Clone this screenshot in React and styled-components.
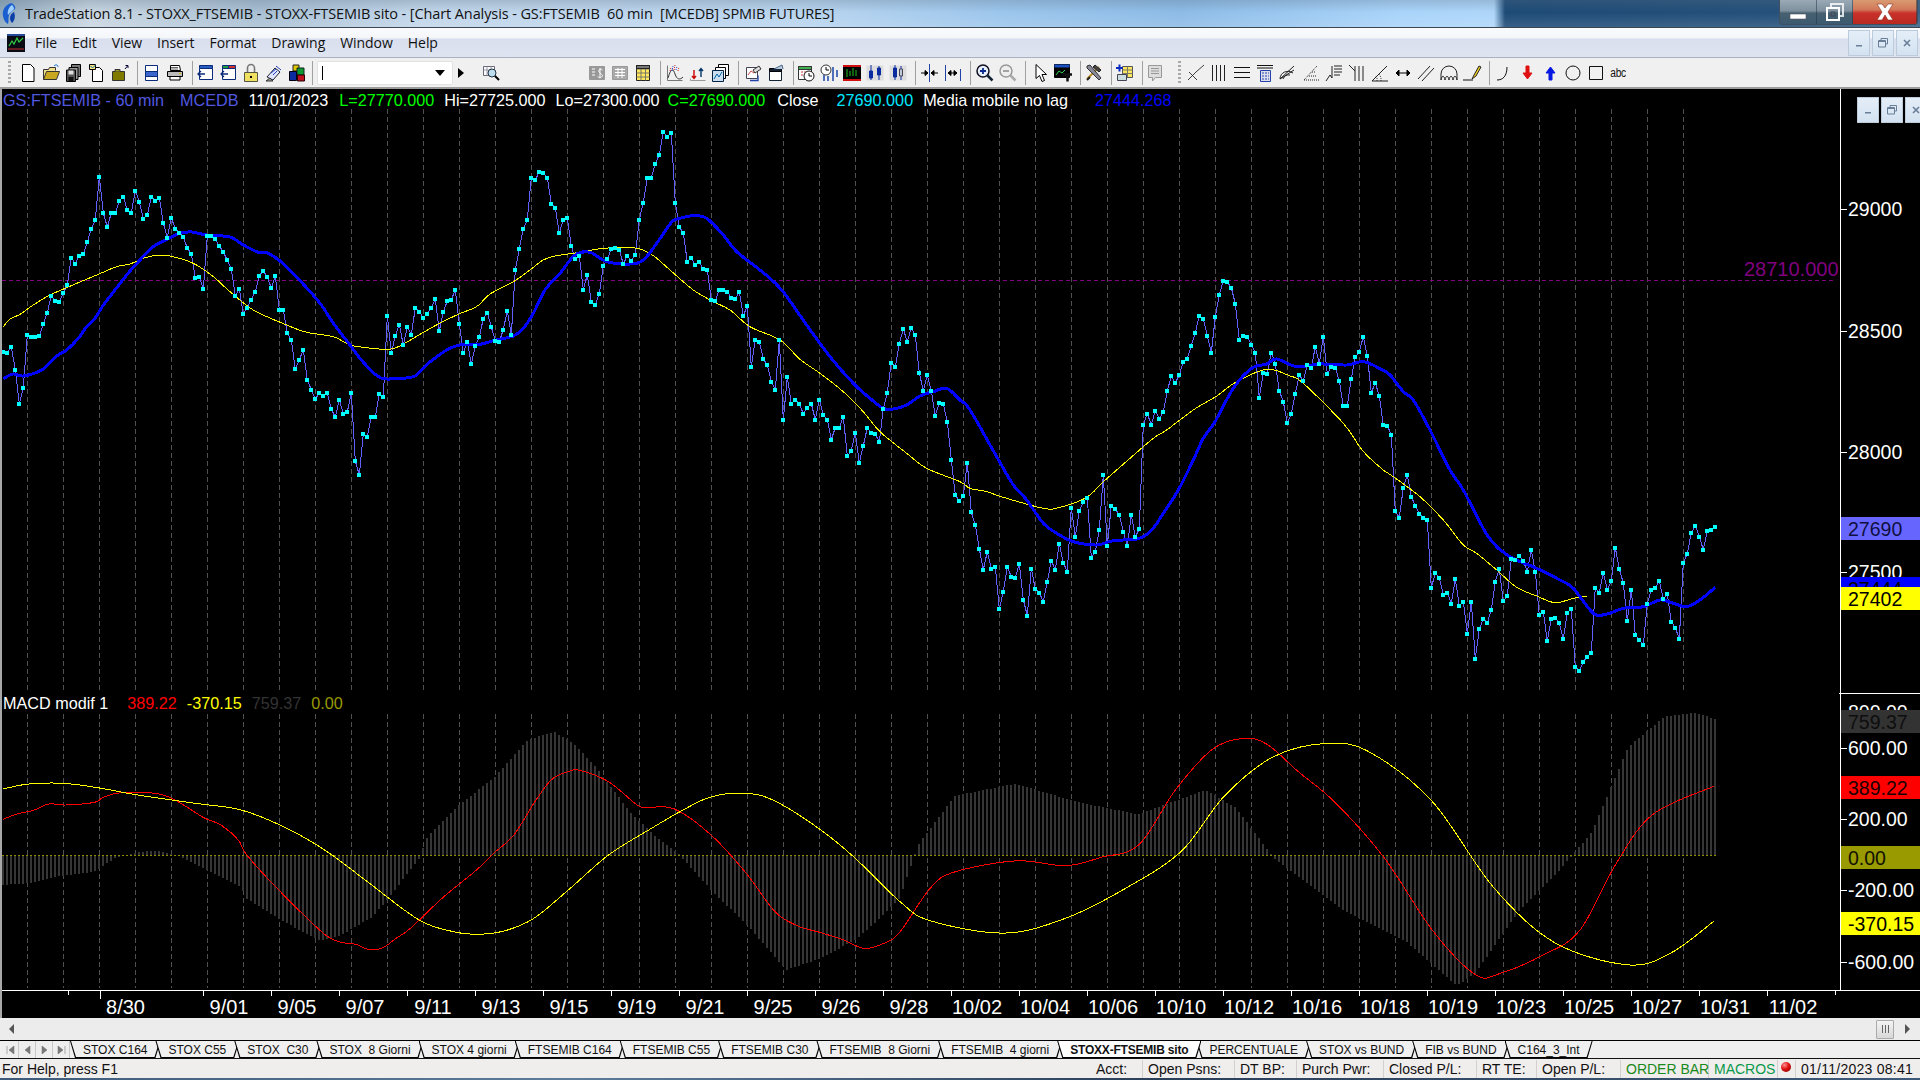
import React from 'react'
import styled, { createGlobalStyle } from 'styled-components'

const GlobalStyle = createGlobalStyle`
  html, body { margin: 0; padding: 0; background: #000; overflow: hidden; }
  * { box-sizing: border-box; }
`

// ---- chart data, read off the screen in pixels ----
const priceRaw = [
  // 120 + v/3
  [120, [696,698,681,749,851,803,645,650,651,648,612,578,527,543,546,519,494,413,431,407,401,366,327,299,171,279,321,279,279,243,230,270,279,212,245,296,285,230,243,233,308,354,293,327,339,351,384,402,474,471,507,348,347,356,378,396,420,447,527,507,581,563,539,515,467,452,471,504,467,569,571,638,660,747,719,689,779,809,837,819,827,818,867,891,839,882,876,818,1023,1065,941,951,890,890,821,831,587,699,647,614,675,620,645,563,575,593,581,563,537,633,575,543,539,509,611,699,665,732,677,651]],
  [120, [596,578,621,662,665,629,572,645,450,386,327,299,173,180,155,158,173,251,263,339,299,293,378,417,407,509,464,545,555,521,437,417,387,383,389,432,407,423,404,299,248,173,173,131,104,35,50,38,248,321,339,425,413,435,425,447,450,539,543,509,509,515,533,537,515,587,557,741,659,665,717,735,785,809,660,899,771,851,840,851,881,863,851,899,839,885,899,959,923,923,890,1008,992,938,1028,977,923,939,943,965,867,818,728,741,671,627,665,623,645,759,812,765,813,887,849,853,905,1019,1125]],
  [260, [723,707,608,757,795,866,929,875,927,920,1047,995,920,950,953,911,1019,1067,926,987,998,1025,965,902,929,851,908,935,743,830,753,725,713,893,875,809,645,857,737,747,764,815,857,765,830,807,494,461,494,452,477,455,393,347,369,345,305,296,257,218,167,176,227,279,171,104,63,66,83,131,239,227,230,254,279,413,339,341,278,311,393,425,489,461,401,345,363,314,323,260,311,230,341,320,323,363,437,437,356,291,275,230,287,398,369,407]],
  [260, [495,497,524,753,773,684,645,710,737,761,773,779,984,938,953,1004,998,1031,957,1037,1025,1121,1025,1196,1107,1077,1089,1049,965,927,1023,1008,897,899,887,903,935,869,935,1065,1055,1143,1076,1073,1089,1137,1059,1047,1221,1233,1205,1191,1179,983,998,938,989,963,863,927,969,1083,989,1125,1139,1155,1031,989,983,962,1017,1001,1085,1103,1137,908,881,818,797,830,869,813,809,801]],
]
const priceY = priceRaw.flatMap(([y0, ys]) => ys.map((v) => y0 + v / 3))
const price = priceY.map((y, i) => [3.33 + 4 * i, y])

const crop = (x0, y0, list) => list.map(([x, y]) => [x0 + x / 3, y0 + y / 3])
const mdi = (x, y) => [x / 1.742, 690 + y / 3]
const ref = (x, y) => [x * 1.2245, y * 1.2245]

const blueMa = [
  ...crop(0, 120, [[10,776],[40,762],[70,768],[125,750],[170,708],[200,690],[235,655],[260,620],[285,595],[310,555],[345,510],[380,465],[420,420],[460,380],[500,358],[540,340],[575,336],[620,345],[690,351],[730,375],[775,397],[800,398],[840,423],[900,482],[960,550],[1000,610],[1050,675],[1080,715],[1120,758],[1150,776],[1200,775],[1245,768],[1285,730],[1340,690],[1380,675],[1440,673]]),
  ...crop(480, 120, [[40,662],[100,648],[130,625],[160,580],[195,510],[240,460],[285,405],[330,397],[380,425],[450,432],[490,420],[530,370],[575,306],[600,295],[640,287],[680,295],[730,345],[770,395],[850,458],[905,510],[980,615],[1050,710],[1120,790],[1170,835],[1210,865],[1240,867],[1280,855],[1320,828],[1360,815],[1400,805],[1440,840]]),
  ...crop(900, 260, [[210,450],[290,590],[340,675],[380,720],[430,790],[470,820],[520,845],[590,855],[640,842],[715,836],[755,810],[790,760],[835,690],[880,600],[910,535],[945,485],[1000,385],[1055,325],[1100,312],[1130,297],[1190,320],[1260,312],[1340,315],[1390,305]]),
  ...crop(1360, 260, [[58,325],[90,345],[130,395],[160,420],[210,510],[270,630],[310,690],[385,830],[450,890],[530,925],[600,960],[640,985],[700,1060],[740,1062],[790,1045],[850,1040],[900,1020],[940,1030],[980,1040],[1020,1020],[1066,982]]),
]
const yellowMa = [
  ...crop(0, 120, [[10,620],[30,597],[60,583],[100,555],[150,525],[200,503],[290,465],[350,440],[390,432],[430,415],[470,406],[510,408],[580,430],[640,470],[690,515],[760,570],[860,615],[920,637],[1000,650],[1050,675],[1100,683],[1170,688],[1210,672],[1300,620],[1370,585],[1420,565],[1440,552]]),
  ...crop(480, 120, [[30,522],[100,485],[150,450],[190,420],[230,407],[300,397],[370,385],[460,383],[500,395],[530,415],[570,450],[640,510],[700,545],[750,570],[810,620],[900,660],[960,718],[1020,760],[1090,815],[1150,875],[1200,935],[1280,1000],[1340,1045],[1440,1085]]),
  ...crop(900, 260, [[210,685],[260,695],[310,712],[430,745],[480,742],[560,712],[610,665],[690,595],[760,535],[800,510],[880,450],[950,408],[1010,365],[1100,328],[1170,348],[1210,370],[1330,490]]),
  ...crop(1360, 260, [[0,562],[30,595],[70,630],[100,650],[180,710],[250,780],[310,855],[350,880],[410,930],[470,982],[530,1008],[585,1028],[640,1015],[680,1009]]),
]
const macdRed = [
  ...[[5,388],[30,372],[60,360],[85,342],[115,345],[165,337],[180,322],[210,308],[275,311],[310,335],[355,383],[385,405],[415,450],[430,495],[480,590],[560,725],[590,755],[620,763],[640,777],[665,775],[690,745],[715,715],[770,625],[830,540],[860,490],[895,435],[930,340],[960,270],[990,245],[1010,241],[1060,275],[1110,345],[1130,352],[1175,357],[1240,437],[1300,550],[1350,665],[1390,708],[1430,728],[1470,750],[1505,775],[1540,760],[1568,725]].map(([x, y]) => mdi(x, y)),
  ...[[760,725],[780,712],[830,703],[870,707],[900,700],[930,690],[960,645],[990,612],[1015,603],[1035,608],[1060,630],[1090,655],[1130,700],[1170,760],[1205,796],[1225,795],[1260,780],[1290,760],[1320,705],[1350,665],[1400,642]].map(([x, y]) => ref(x, y)),
]
const macdYellow = [
  ...[[5,297],[50,282],[110,280],[170,293],[240,315],[340,340],[420,360],[500,415],[570,485],[640,575],[730,690],[790,725],[830,733],[880,722],[930,685],[990,600],[1060,495],[1130,420],[1190,360],[1240,320],[1300,310],[1350,333],[1430,420],[1490,505],[1568,635]].map(([x, y]) => mdi(x, y)),
  ...[[760,752],[820,762],[870,750],[920,725],[965,695],[1000,650],[1040,618],[1085,607],[1120,615],[1170,655],[1220,725],[1270,770],[1330,788],[1365,778],[1400,752]].map(([x, y]) => ref(x, y)),
]
const histOutline = [
  ...[[0,585],[50,580],[100,560],[165,545],[200,505],[240,487],[275,481],[310,497],[350,530],[420,590],[430,625],[500,700],[560,752],[590,740],[650,680],[680,620],[710,550],[730,510],[745,440],[800,345],[860,265],[920,150],[965,125],[1000,160],[1040,235],[1100,370],[1150,450],[1185,495],[1200,525],[1250,620],[1300,700],[1370,840],[1430,805],[1490,750],[1530,690],[1568,625]].map(([x, y]) => mdi(x, y)),
  ...[[750,690],[780,650],[830,640],[880,655],[930,665],[985,645],[1010,660],[1040,700],[1060,715],[1100,745],[1150,770],[1190,805],[1205,795],[1240,745],[1270,715],[1300,680],[1330,610],[1360,585],[1385,582],[1400,587]].map(([x, y]) => ref(x, y)),
]
const histAt = (x) => {
  for (let i = 1; i < histOutline.length; i++) {
    const [x1, y1] = histOutline[i]
    const [x0, y0] = histOutline[i - 1]
    if (x <= x1) return y0 + ((x - x0) / (x1 - x0)) * (y1 - y0)
  }
  return histOutline[histOutline.length - 1][1]
}

const poly = (list) => list.map(([x, y]) => `${x.toFixed(1)},${y.toFixed(1)}`).join(' ')
// the averages are smooth in the picture, the points above are sparse
const smooth = (list) => {
  let d = `M${list[0][0].toFixed(1)} ${list[0][1].toFixed(1)}`
  for (let i = 0; i < list.length - 1; i++) {
    const p0 = list[i - 1] || list[i]
    const p1 = list[i]
    const p2 = list[i + 1]
    const p3 = list[i + 2] || p2
    const c1 = [p1[0] + (p2[0] - p0[0]) / 6, p1[1] + (p2[1] - p0[1]) / 6]
    const c2 = [p2[0] - (p3[0] - p1[0]) / 6, p2[1] - (p3[1] - p1[1]) / 6]
    d += `C${c1[0].toFixed(1)} ${c1[1].toFixed(1)} ${c2[0].toFixed(1)} ${c2[1].toFixed(1)} ${p2[0].toFixed(1)} ${p2[1].toFixed(1)}`
  }
  return d
}
const gridXs = Array.from({ length: 47 }, (_, i) => 27.5 + 36 * i)
const dateTicks = ['9/01','9/05','9/07','9/11','9/13','9/15','9/19','9/21','9/25','9/26','9/28','10/02','10/04','10/06','10/10','10/12','10/16','10/18','10/19','10/23','10/25','10/27','10/31','11/02']

// ---- page frame ----
const Page = styled.div`
  width: 1920px;
  height: 1080px;
  display: flex;
  flex-direction: column;
  overflow: hidden;
  background: #f0f0f0;
  font-family: "Liberation Sans", Arial, sans-serif;
`
const TitleBar = styled.div`
  height: 28px;
  flex: none;
  display: flex;
  align-items: center;
  justify-content: space-between;
  padding-left: 2px;
  border-bottom: 1px solid #3c4650;
  background:
    linear-gradient(180deg, rgba(90,110,130,.28) 0, rgba(255,255,255,0) 45%, rgba(255,255,255,.12) 100%),
    linear-gradient(90deg, #8fa9bd 0, #c9d6e2 90px, #a9c0d4 260px, #c2d6ea 420px, #b9d5ef 800px, #9cc6ec 1000px, #8dbbe6 1180px, #a9d4fa 1400px, #aed6fa 1494px, #1d4a76 1505px, #24507a 1780px, #3a6286 1920px);
`
const TitleText = styled.span`
  margin-left: 7px;
  font-family: "Open Sans", sans-serif;
  font-size: 14.5px;
  letter-spacing: -0.1px;
  white-space: pre;
  color: #111;
`
const TitleLeft = styled.div`
  display: flex;
  align-items: center;
`
const WindowButtons = styled.div`
  display: flex;
  height: 25px;
  margin: -3px 2px 0 0;
  border: 1px solid #40505f;
  border-top: 0;
  border-radius: 0 0 4px 4px;
  overflow: hidden;
`
const WindowButton = styled.div`
  width: ${(p) => p.$w}px;
  display: flex;
  align-items: center;
  justify-content: center;
  border-right: 1px solid rgba(30,50,70,.5);
  background: ${(p) => p.$close
    ? 'linear-gradient(180deg, #d99a70 0, #d2785a 40%, #c9302a 55%, #b92a20 100%)'
    : 'linear-gradient(180deg, #9aaab6 0, #7e909e 45%, #46606f 55%, #3d5a70 100%)'};
`
const MenuBar = styled.div`
  height: 30px;
  flex: none;
  display: flex;
  align-items: center;
  padding-left: 7px;
  border-bottom: 1px solid #aab2c2;
  background: linear-gradient(180deg, #fafbfd 0, #f4f6fa 35%, #d9dfee 37%, #dfe4f1 100%);
`
const MenuItems = styled.div`
  display: flex;
  gap: 15px;
  margin-left: 10px;
  flex: 1;
`
const MenuItem = styled.span`
  font-family: "Open Sans", sans-serif;
  font-size: 14px;
  letter-spacing: -0.05px;
  color: #111;
`
const MdiButtons = styled.div`
  display: flex;
  gap: 2px;
  padding-right: 2px;
`
const MdiButton = styled.div`
  width: 22px;
  height: 26px;
  display: flex;
  align-items: center;
  justify-content: center;
  border: 1px solid #bccbdc;
  background: linear-gradient(180deg, #e4eef8, #d4e2f1);
`

// ---- toolbar ----
const ToolBar = styled.div`
  height: 31px;
  flex: none;
  display: flex;
  align-items: center;
  padding-left: 8px;
  background: #f0f0f0;
  border-bottom: 2px solid #9c9c9c;
`
const Grip = styled.div`
  width: 3px;
  height: 24px;
  margin-left: ${(p) => p.$before || 0}px;
  margin-right: ${(p) => p.$after || 0}px;
  background: repeating-linear-gradient(180deg, #a8a8a8 0 2px, transparent 2px 4px);
`
const Sep = styled.div`
  width: 1px;
  height: 24px;
  margin: 0 ${(p) => p.$after ?? 2}px 0 ${(p) => p.$before ?? 6}px;
  background: #a0a0a0;
`
const ToolButton = styled.div`
  width: 23px;
  height: 24px;
  flex: none;
  display: flex;
  align-items: center;
  justify-content: center;
  margin-left: ${(p) => p.$before || 0}px;
`
const Combo = styled.div`
  width: 136px;
  height: 24px;
  margin-left: 4px;
  display: flex;
  align-items: center;
  justify-content: space-between;
  padding: 0 7px 0 4px;
  background: #fff;
  border: 1px solid #e2e2e2;
  border-radius: 2px;
`
const Caret = styled.div`
  width: 1px;
  height: 14px;
  background: #000;
`
const ComboArrow = styled.div`
  width: 0;
  height: 0;
  border-left: 5px solid transparent;
  border-right: 5px solid transparent;
  border-top: 6px solid #000;
`
const PlayArrow = styled.div`
  width: 0;
  height: 0;
  margin-left: 5px;
  border-top: 5px solid transparent;
  border-bottom: 5px solid transparent;
  border-left: 6px solid #000;
`
const AbcLabel = styled.span`
  font-size: 12px;
  letter-spacing: -0.4px;
  color: #111;
  transform: scaleX(.85);
`

const I = ({ children, size = 20 }) => (
  <svg width={size} height={size} viewBox="0 0 20 20" fill="none" stroke="#000" strokeWidth="1">{children}</svg>
)

const icons = {
  newDoc: <path d="M4.500 1.500h8l3.500 3.500v13.500h-11.500z" fill="#fff" />,
  open: <><path d="M2.500 16.500v-10h5l1-2h6v3" fill="#f0e08a" stroke="#333" /><path d="M2.500 16.500l3-8h13l-3 8z" fill="#c8a820" stroke="#333" /><path d="M13 3c2-2 4-1 4 1" stroke="#06c" /></>,
  saveAll: <><path d="M7.500 1.500h9v12h-9z" fill="#777" /><path d="M5 4.500h9v12h-9z" fill="#999" /><path d="M2.500 7h9v11.500h-9z" fill="#555" /><path d="M4.500 7.500h5v4h-5z" fill="#ddd" stroke="none" /><path d="M4.500 14h5v4h-5z" fill="#111" stroke="none" /></>,
  checkDoc: <><path d="M5.500 4.500h7l3 3v11h-10z" fill="#fff" /><path d="M2.500 1.500h6v5h-6z" fill="#ffe680" /><path d="M3.500 3l2 2 3-3" stroke="#06a" /></>,
  olive: <><path d="M2.500 8.500h12v9h-12z" fill="#807a00" stroke="#333" /><path d="M5 8.500v-2h5v2" fill="#a09a20" stroke="#333" /><path d="M15 6l2.500-3M15.500 2.500h2.500v2.500" stroke="#003" /></>,
  preview: <><path d="M3.500 2.500h12v15h-12z" fill="#fff" stroke="#0a2a7a" /><path d="M3.500 8.500h12v5h-12z" fill="#3a66cc" stroke="#0a2a7a" /></>,
  printer: <><path d="M5.500 2.500h9l1 5h-10z" fill="#fff" /><path d="M2.500 8.500h15v5h-15z" fill="#bbb" /><path d="M5 13.500h10v3.500h-10z" fill="#fff" /><path d="M6 4.500h7M6 6h7" stroke="#666" /><path d="M14 10.500h2" stroke="#e0c000" /></>,
  winBlue: <><path d="M4.500 2.500h13v3h-13z" fill="#2a5bc0" stroke="#0a2a7a" /><path d="M4.500 5.500h13v11h-13z" fill="#fff" stroke="#0a2a7a" /><path d="M10 11h-7M6 8l-3 3 3 3" stroke="#0a2a7a" strokeWidth="1.300" /></>,
  winRed: <><path d="M4.500 2.500h6v3h-6z" fill="#20a040" stroke="#0a2a7a" /><path d="M10.500 2.500h7v3h-7z" fill="#d03030" stroke="#0a2a7a" /><path d="M4.500 5.500h13v11h-13z" fill="#fff" stroke="#0a2a7a" /><path d="M10 11h-7M6 8l-3 3 3 3" stroke="#0a2a7a" strokeWidth="1.300" /></>,
  lock: <><path d="M6.500 9v-4a3.500 3.500 0 0 1 7 0v4" stroke="#777" strokeWidth="1.600" /><path d="M3.500 9.500h13v9h-13z" fill="#efe060" stroke="#554" /><path d="M9 13h2v2h-2z" fill="#000" stroke="none" /></>,
  scan: <><path d="M3 14l8-9 5 4-7 8z" fill="#dfe4ff" stroke="#223" /><path d="M7 10l5-4M9 12l4-4M12 3l5 4" stroke="#2040c0" /><path d="M2 18l4-3 3 3z" fill="#999" stroke="#333" /></>,
  cubes: <><path d="M6 2h6v6h-6z" fill="#e0c800" stroke="#222" /><path d="M10 5h7v7h-7z" fill="#0a9a30" stroke="#122" /><path d="M2.500 8.500h7v9h-7z" fill="#0a2aa0" stroke="#001" /><path d="M10.500 12h7v6h-7z" fill="#c01020" stroke="#200" /></>,
  findGrid: <><path d="M2.500 3.500h11v9h-11z" fill="#fff" stroke="#667" /><path d="M2.500 7h11M6 3.500v9M10 3.500v9" stroke="#99a" /><circle cx="11" cy="10" r="4" fill="#bde" stroke="#234" /><path d="M14 13l4 4" strokeWidth="2" /></>,
  calcGrey: <><path d="M2.500 3.500h15v13h-15z" fill="#999" stroke="#999" /><path d="M5 6h3M5 9h3M5 12h3" stroke="#fff" /><path d="M13 5v10M15.500 7c-2-2-5 0-3 2.500s4 2 2.500 4-4 1-4 0" stroke="#fff" /></>,
  tableGrey: <><path d="M2.500 3.500h15v13h-15z" fill="#aaa" stroke="#999" /><path d="M5 6.500h10M5 9.500h10M5 12.500h10M8 5v10M12 5v10" stroke="#fff" /></>,
  tableYellow: <><path d="M3.500 2.500h13v15h-13z" fill="#ffe860" stroke="#222" /><path d="M3.500 6h13M3.500 10h13M3.500 14h13M8 2.500v15M12.500 2.500v15" stroke="#776" /><path d="M3.500 2.500h13v3h-13z" fill="#777" stroke="#222" /></>,
  waves: <><path d="M2.500 2.500v15h15" stroke="#777" /><path d="M3 15c3-10 5-10 7-4s5 6 8 3" stroke="#333" /><path d="M5 8l1-4M9 7l1-5M13 8l1-4" stroke="#c22" strokeDasharray="1 1" /><path d="M7 8l1-5M11 7l1-4" stroke="#24c" strokeDasharray="1 1" /></>,
  redBlue: <><path d="M2.500 17.500h15M2.500 17.500v-2" stroke="#999" /><path d="M6 7v8M4 13l2 2.500 2-2.500" stroke="#c00" strokeWidth="1.400" /><path d="M13 14v-8M11 8l2-2.500 2 2.500" stroke="#036" strokeWidth="1.400" /></>,
  stack: <><path d="M7.500 1.500h10v11h-10z" fill="#fff" /><path d="M4.500 4.500h10v11h-10z" fill="#fff" /><path d="M1.500 7.500h11v11h-11z" fill="#cde" stroke="#024" /><path d="M3 16l3-5 2 3 3-5" stroke="#06a" /></>,
  docChart: <><path d="M3.500 4.500h11v11h-11z" fill="#fff" stroke="#445" /><path d="M5 12l3-4 3 2 4-6" stroke="#c44" /><path d="M7 17.500h8v-5" stroke="#24a" strokeWidth="1.300" /><path d="M10 7l6-4 2 3-6 4z" fill="#ddd" stroke="#333" /></>,
  winArrow: <><path d="M3.500 8.500h12v9h-12z" fill="#fff" stroke="#123" /><path d="M3.500 5.500h12v3h-12z" fill="#123" /><path d="M8 6l8-4 1 4" stroke="#468" fill="#bcd" /></>,
  calendar: <><path d="M2.500 3.500h13v13h-13z" fill="#fff" stroke="#333" /><path d="M2.500 3.500h13v3h-13z" fill="#40b050" stroke="#333" /><path d="M5 9h2M8 9h2M5 12h2" stroke="#c33" /><circle cx="13" cy="13" r="5" fill="#fff" stroke="#111" /><path d="M13 10v3h3" /></>,
  clockBars: <><circle cx="7" cy="7" r="5" fill="#fff" stroke="#333" /><path d="M7 4v3h3" /><path d="M5 12v6M9 13v5M14 4v14M18 7v7" stroke="#2a50b0" strokeWidth="1.600" /></>,
  darkChart: <><path d="M1 2h18v16h-18z" fill="#000" stroke="none" /><path d="M1 2h18v2h-18zM1 16h18v2h-18z" fill="#d01010" stroke="none" /><path d="M5 6v8M8 8v5M11 5v8M14 7v6" stroke="#20c020" /></>,
  candles: <><path d="M1.500 2.500h17v15h-17z" fill="#ddd" stroke="none" /><path d="M6 2v15M14 3v14" stroke="#0a2aa0" strokeWidth="1" /><path d="M4.500 8h3v7h-3zM12.500 5h3v7h-3z" fill="#0a2aa0" stroke="#0a2aa0" /></>,
  candlesRed: <><path d="M1.500 2.500h17v15h-17z" fill="#ddd" stroke="none" /><path d="M7 2v15M13 3v14" stroke="#0a2aa0" /><path d="M5.500 5h3v9h-3z" fill="#0a2aa0" stroke="#0a2aa0" /><path d="M11.500 6h3v7h-3z" fill="#c0c8d8" stroke="#445" /></>,
  squeeze: <><path d="M9.500 1v18" stroke="#24a" /><path d="M1 10h4M8 10l-3-2.500v5zM18 10h-4M11 10l3-2.500v5z" fill="#000" stroke="#000" /></>,
  spread: <><path d="M2.500 2v16M17.500 6v12" stroke="#24a" /><path d="M5 10l3-2.500v5zM14 10l-3-2.500v5zM8 10h3" fill="#000" stroke="#000" /></>,
  zoomIn: <><circle cx="8" cy="8" r="6" fill="#e8f0fa" stroke="#112" strokeWidth="1.500" /><path d="M5 8h6M8 5v6" stroke="#0a2a90" strokeWidth="1.800" /><path d="M12.500 12.500l5 5" stroke="#123" strokeWidth="2.500" /></>,
  zoomOut: <><circle cx="8" cy="8" r="6" fill="#eee" stroke="#999" strokeWidth="1.500" /><path d="M5 8h6" stroke="#999" strokeWidth="1.800" /><path d="M12.500 12.500l5 5" stroke="#aaa" strokeWidth="2.500" /></>,
  pointer: <path d="M6 1.500v14l3.500-3 2.500 6 2.500-1-2.500-6h4.500z" fill="#fff" stroke="#000" />,
  winT: <><path d="M1.500 1.500h15v13h-15z" fill="#000" stroke="#000" /><path d="M1.500 1.500h15v3h-15z" fill="#1a50c0" stroke="none" /><path d="M3 12l3-4 3 2 3-3" stroke="#30d050" /><path d="M10 11.500h9M14.500 11.500v7" stroke="#111" strokeWidth="2.500" /></>,
  hammer: <><path d="M3 16L15 4" stroke="#b88a20" strokeWidth="2" /><path d="M3 3l3-1 11 13-2 2L3 5z" fill="#889" stroke="#333" /><path d="M11 2l6 5-2 2-6-5z" fill="#444" stroke="#222" /><path d="M3 17l3-3" stroke="#222" strokeWidth="2" /></>,
  plusGrid: <><path d="M7.500 3.500h10v11h-10z" fill="#ffe860" stroke="#555" /><path d="M7.500 7h10M7.500 10.500h10M12.500 3.500v11" stroke="#776" /><path d="M1 5h7M4.500 1.500v7" stroke="#0a2ac0" strokeWidth="2" /><path d="M2.500 11.500h9v6h-9z" fill="#cdd" stroke="#445" /></>,
  noteGrey: <><path d="M3.500 2.500h13v12h-6l-3 3.500v-3.500h-4z" fill="#ddd" stroke="#999" /><path d="M6 5.500h8M6 8h8M6 10.500h8" stroke="#999" /></>,
  trend: <path d="M2 17L10 9M10 9l8-7M3 9l8 8" stroke="#111" strokeWidth=".8" />,
  vLines: <path d="M3.500 2v16M7.500 2v16M11.500 2v16M15.500 2v16" stroke="#222" />,
  hLines: <path d="M2 4.500h16M2 9.500h16M2 14.500h16" stroke="#111" />,
  calcLines: <><path d="M2 2.500h16M2 5h16" stroke="#111" /><path d="M5.500 7.500h10v11h-10z" fill="#dde" stroke="#24a" /><path d="M7 10h7M7 13h7M7 16h7" stroke="#24a" strokeDasharray="2 1" /></>,
  fan: <><path d="M2 16a8 8 0 0 1 13-6M5 16a6 6 0 0 1 7-4M2 16L16 3M2 16l14-9" stroke="#222" /></>,
  dotted: <><path d="M3 17L16 3" stroke="#222" strokeDasharray="1 1" /><path d="M3 17h15M8 13h8M11 9h4" stroke="#222" strokeDasharray="1 1" /></>,
  retrace: <><path d="M2 18l4-6 2 3V3" stroke="#222" /><path d="M10 3h8M10 6h8M10 9h8M10 12h6" stroke="#222" /></>,
  fork: <path d="M2 2l6 6M8 3v15M12 3v15M16 3v15" stroke="#222" />,
  angle: <><path d="M2 18L17 3M2 18h16" stroke="#222" /><path d="M7 18a7 7 0 0 0-1-5M11 18a9 9 0 0 0-2-7" stroke="#222" strokeDasharray="1 1" /></>,
  arrows: <path d="M3 10h14M6 7l-3 3 3 3zM14 7l3 3-3 3z" fill="#000" stroke="#000" />,
  parallels: <path d="M2 16L14 3M6 18L18 5" stroke="#222" />,
  arches: <><path d="M2 17v-6a8 8 0 0 1 16 0v6" stroke="#222" /><path d="M2 17c1-5 3-5 4 0 1-5 3-5 4 0 1-5 3-5 4 0 1-5 3-5 4 0" stroke="#222" /></>,
  pencil: <><path d="M1 17h10" stroke="#111" /><path d="M10 16l2-4 5-9 2 1-5 9z" fill="#f0d020" stroke="#222" /></>,
  curve: <path d="M3 17c6 0 10-4 10-13" stroke="#111" />,
  downRed: <path d="M9 3h3v7h3l-4.500 6-4.500-6h3z" fill="#e01010" stroke="#e01010" />,
  upBlue: <path d="M9 17h3v-7h3l-4.500-6-4.500 6h3z" fill="#0818e0" stroke="#0818e0" />,
  circle: <circle cx="10" cy="10" r="7" stroke="#111" />,
  square: <path d="M3.500 3.500h13v13h-13z" stroke="#111" />,
}

const toolbar = [
  ['grip'], 'newDoc','open','saveAll','checkDoc','olive', ['sep'], 'preview','printer', ['sep', 6, 0], 'winBlue','winRed','lock','scan','cubes', ['sep', 4, 0], ['combo'], ['play'], ['icon', 'findGrid', 15],
  ['icon', 'calcGrey', 83], 'tableGrey','tableYellow', ['sep'], 'waves','redBlue','stack', ['sep'], 'docChart','winArrow', ['sep', 6, 0], 'calendar','clockBars','darkChart','candles','candlesRed', ['sep'], 'squeeze','spread', ['sep'], 'zoomIn','zoomOut', ['sep'], 'pointer','winT', ['sep', 6, 1], 'hammer', ['sep', 6, 1], 'plusGrid', ['sep', 6, 0], 'noteGrey',
  ['grip2'], 'trend','vLines','hLines','calcLines','fan','dotted','retrace','fork','angle','arrows','parallels','arches','pencil', ['sep'], 'curve','downRed','upBlue','circle','square', ['abc'],
]

// ---- chart ----
const ChartArea = styled.div`
  position: relative;
  height: 929px;
  flex: none;
  background: #000;
  border-left: 2px solid #a8a8a8;
  overflow: hidden;
`
const ChartSvg = styled.svg`
  display: block;
  margin-left: -2px;
  font-family: "Liberation Sans", Arial, sans-serif;
`
const Legend = styled.div`
  position: absolute;
  left: ${(p) => p.$left}px;
  top: ${(p) => p.$top}px;
  display: flex;
  gap: 10px;
  font-size: 16.2px;
  line-height: 20px;
  white-space: pre;
`
const LegendItem = styled.span`
  color: ${(p) => p.$color};
  margin-left: ${(p) => p.$extra || 0}px;
`
const ChartButtons = styled.div`
  position: absolute;
  top: 8px;
  right: -7px;
  display: flex;
  gap: 2px;
`

// ---- bottom rows ----
const ScrollRow = styled.div`
  height: 22px;
  flex: none;
  display: flex;
  align-items: center;
  justify-content: space-between;
  padding: 0 10px 0 9px;
  background: #ececec;
`
const ScrollLeft = styled.div`
  width: 0;
  height: 0;
  border-top: 5px solid transparent;
  border-bottom: 5px solid transparent;
  border-right: 5px solid #555;
`
const ScrollRight = styled.div`
  width: 0;
  height: 0;
  margin-left: 11px;
  border-top: 5px solid transparent;
  border-bottom: 5px solid transparent;
  border-left: 5px solid #555;
`
const ScrollEnd = styled.div`
  display: flex;
  align-items: center;
`
const ScrollThumb = styled.div`
  width: 18px;
  height: 19px;
  display: flex;
  align-items: center;
  justify-content: center;
  gap: 2px;
  border: 1px solid #aaa;
  border-radius: 1px;
  background: linear-gradient(180deg, #f4f4f4, #d8d8d8);
`
const ThumbLine = styled.div`
  width: 1px;
  height: 8px;
  background: #666;
`
const TabRow = styled.div`
  height: 19px;
  flex: none;
  display: flex;
  align-items: stretch;
  padding-left: 2px;
  background: #efefef;
  border-top: 1px solid #000;
  border-bottom: 1px solid #111;
`
const TabNav = styled.div`
  width: 17px;
  display: flex;
  align-items: center;
  justify-content: center;
  border-right: 1px solid #c8c8c8;
  background: #eee;
`
const Tab = styled.div`
  position: relative;
  isolation: isolate;
  z-index: ${(p) => (p.$active ? 2 : 1)};
  padding: 0 13px;
  margin-right: -5px;
  font-size: 12px;
  line-height: 18px;
  font-weight: ${(p) => (p.$active ? 700 : 400)};
  letter-spacing: ${(p) => (p.$active ? '-0.2px' : 0)};
  white-space: pre;
  color: #111;
  &::before, &::after {
    content: '';
    position: absolute;
    inset: 0;
    z-index: -1;
    clip-path: polygon(0 0, 100% 0, calc(100% - 5px) 100%, 5px 100%);
  }
  &::before { background: #000; }
  &::after {
    left: 1px;
    right: 1px;
    bottom: 1px;
    background: ${(p) => (p.$active ? '#fff' : '#f0f0f0')};
  }
`
const StatusBar = styled.div`
  height: 19px;
  flex: none;
  display: flex;
  align-items: center;
  padding-top: 1px;
  background: #f0eded;
  font-size: 14px;
  color: #111;
`
const StatusHelp = styled.div`
  flex: 1;
  padding-left: 2px;
`
const StatusCell = styled.div`
  width: ${(p) => p.$w}px;
  height: 100%;
  padding-left: 5px;
  display: flex;
  align-items: center;
  flex: none;
  white-space: nowrap;
  color: ${(p) => p.$color || '#111'};
  letter-spacing: ${(p) => p.$track || 0}px;
  border-right: 1px solid ${(p) => (p.$last ? 'transparent' : '#d4d0d0')};
`
const RedBall = styled.div`
  width: 10px;
  height: 10px;
  margin: -4px 0 0 -2px;
  border-radius: 50%;
  background: radial-gradient(circle at 35% 30%, #ff9090 0, #e01010 45%, #700 100%);
`
const TaskStrip = styled.div`
  flex: 1;
  background: linear-gradient(90deg, #3e5a7a, #5c7c9c 30%, #2a3f5a 60%, #3e5a7a);
`

const tabs = ['STOX C164','STOX C55','STOX  C30','STOX  8 Giorni','STOX 4 giorni','FTSEMIB C164','FTSEMIB C55','FTSEMIB C30','FTSEMIB  8 Giorni','FTSEMIB  4 giorni','STOXX-FTSEMIB sito','PERCENTUALE','STOX vs BUND','FIB vs BUND','C164_3_Int']
const statusCells = [
  ['Acct:', 52], ['Open Psns:', 92], ['DT BP:', 62], ['Purch Pwr:', 87], ['Closed P/L:', 93], ['RT TE:', 60], ['Open P/L:', 84],
  ['ORDER BAR', 88, '#1a8a1a'], ['MACROS', 69, '#0a9a4a'],
]

const MinGlyph = () => <svg width="10" height="10" viewBox="0 0 10 10"><path d="M2 7h6v1.500H2z" fill="#6a7f97" /></svg>
const RestoreGlyph = () => <svg width="12" height="12" viewBox="0 0 12 12" fill="none" stroke="#6a7f97" strokeWidth="1"><path d="M4 3V1.500h6.500V7H9" /><path d="M1.500 3.500h7V10h-7z" /><path d="M1.500 4.500h7" /></svg>
const CloseGlyph = () => <svg width="10" height="10" viewBox="0 0 10 10" fill="none" stroke="#6a7f97" strokeWidth="1.600"><path d="M2 2l6 6M8 2L2 8" /></svg>

const NavGlyph = ({ d }) => <svg width="9" height="10" viewBox="0 0 9 10"><path d={d} fill="#777" stroke="#777" strokeWidth=".6" /></svg>

const MdiSet = () => (
  <>
    <MdiButton><MinGlyph /></MdiButton>
    <MdiButton><RestoreGlyph /></MdiButton>
    <MdiButton><CloseGlyph /></MdiButton>
  </>
)

const PriceTag = ({ y, h = 23, bg, fg, text }) => (
  <g>
    <rect x="1841" y={y} width="79" height={h} fill={bg} />
    <text x="1848" y={y + 18.5} fontSize="19.5" fill={fg}>{text}</text>
  </g>
)
const AxisLabel = ({ y, text }) => (
  <g>
    <path d={`M1841 ${y + .5}h6`} stroke="#fff" />
    <text x="1848" y={y + 7} fontSize="19.5" fill="#fff">{text}</text>
  </g>
)

const Chart = () => (
  <ChartSvg width="1920" height="929" viewBox="0 89 1920 929">
    {/* time grid */}
    <g stroke="#505050" strokeDasharray="5 3" shapeRendering="crispEdges">
      {gridXs.map((x) => <path key={x} d={`M${x} 109V693M${x} 714V988`} />)}
    </g>
    <path d="M2 280.500H1836" stroke="#800080" strokeDasharray="4 3" shapeRendering="crispEdges" />
    <text x="1744" y="276" fontSize="20" fill="#800080">28710.000</text>

    {/* price pane */}
    <polyline points={poly(price)} fill="none" stroke="#6060ff" strokeWidth="1" shapeRendering="crispEdges" />
    <path d={smooth(yellowMa)} fill="none" stroke="#ffff00" strokeWidth="1" shapeRendering="crispEdges" />
    <path d={smooth(blueMa)} fill="none" stroke="#0000ff" strokeWidth="3" shapeRendering="crispEdges" />
    <g fill="#00ffff" shapeRendering="crispEdges">
      {price.map(([x, y], i) => <rect key={i} x={Math.round(x - 2)} y={Math.round(y - 2)} width="4" height="4" />)}
    </g>

    {/* macd pane */}
    <g stroke="#363636" strokeWidth="2" shapeRendering="crispEdges">
      {price.map(([x], i) => <path key={i} d={`M${Math.round(x)} 855V${histAt(x).toFixed(0)}`} />)}
    </g>
    <path d="M2 855.500H1716" stroke="#8c8c00" strokeDasharray="2 2" shapeRendering="crispEdges" />
    <path d={smooth(macdRed)} fill="none" stroke="#ff0000" strokeWidth="1" shapeRendering="crispEdges" />
    <path d={smooth(macdYellow)} fill="none" stroke="#ffff00" strokeWidth="1" shapeRendering="crispEdges" />

    {/* axis frames */}
    <g stroke="#fff" shapeRendering="crispEdges">
      <path d="M1840.500 89V990" />
      <path d="M1839 693.500H1920" />
      <path d="M2 990.500H1920" />
      <path d="M68 991v4M100 991v8M1835 991v4" />
      {dateTicks.map((_, i) => <path key={i} d={`M${203 + 68 * i} 991v5`} />)}
    </g>

    {/* date labels */}
    <g fontSize="20" fill="#fff" textAnchor="middle">
      <text x="125.500" y="1014">8/30</text>
      {dateTicks.map((d, i) => <text key={d} x={229 + 68 * i} y="1014">{d}</text>)}
    </g>

    {/* price axis */}
    <AxisLabel y={209} text="29000" />
    <AxisLabel y={331} text="28500" />
    <AxisLabel y={452} text="28000" />
    <AxisLabel y={572} text="27500" />
    <PriceTag y={517} bg="#6666ff" fg="#101040" text="27690" />
    <PriceTag y={577} h={23} bg="#0000ff" fg="#000" text="27444" />
    <PriceTag y={587} bg="#ffff00" fg="#000" text="27402" />

    {/* macd axis */}
    <AxisLabel y={712} text="800.00" />
    <AxisLabel y={748} text="600.00" />
    <AxisLabel y={819} text="200.00" />
    <AxisLabel y={890} text="-200.00" />
    <AxisLabel y={962} text="-600.00" />
    <PriceTag y={710} bg="#333333" fg="#0e0e0e" text="759.37" />
    <PriceTag y={776} bg="#ff0000" fg="#200000" text="389.22" />
    <PriceTag y={846} bg="#999900" fg="#111100" text="0.00" />
    <PriceTag y={912} bg="#ffff00" fg="#000" text="-370.15" />
  </ChartSvg>
)

export default function App() {
  return (
    <Page>
      <GlobalStyle />
      <TitleBar>
        <TitleLeft>
          <svg width="16" height="21" viewBox="0 0 16 21">
            <path d="M9 0C3 2 0 7 1 13c.5 4 3 7 5 8 1-3 0-6 1-9 1-3 4-4 6-6 1-2-1-5-4-6z" fill="#1a5fd0" />
            <path d="M10 2C7 4 5 8 6 12c2-3 5-4 6-6 0-2-1-3-2-4z" fill="#9fd0ff" />
            <path d="M12 9c-2 1-4 3-4 6 0 2 1 4 2 5 2-2 4-6 2-11z" fill="#0d3fa8" />
          </svg>
          <TitleText>TradeStation 8.1 - STOXX_FTSEMIB - STOXX-FTSEMIB sito - [Chart Analysis - GS:FTSEMIB  60 min  [MCEDB] SPMIB FUTURES]</TitleText>
        </TitleLeft>
        <WindowButtons>
          <WindowButton $w={37}>
            <svg width="18" height="16" viewBox="0 0 18 16"><path d="M1 10h16v5H1z" fill="#fff" stroke="#556" strokeWidth=".6" /></svg>
          </WindowButton>
          <WindowButton $w={36}>
            <svg width="20" height="20" viewBox="0 0 20 20" fill="none" stroke="#fff" strokeWidth="2"><path d="M6 5V2h12v12h-3" opacity=".8" /><path d="M2 6h12v12H2z" /><path d="M6 10h4v4H6z" stroke="#445" strokeWidth="1" /></svg>
          </WindowButton>
          <WindowButton $w={64} $close>
            <svg width="22" height="20" viewBox="0 0 22 20"><path d="M3 2h5l3 4 3-4h5l-5 8 5 8h-5l-3-5-3 5H3l5-8z" fill="#fff" stroke="#8a3020" strokeWidth=".6" /></svg>
          </WindowButton>
        </WindowButtons>
      </TitleBar>

      <MenuBar>
        <svg width="18" height="18" viewBox="0 0 18 18">
          <path d="M0 0h18v18H0z" fill="#0a0a14" />
          <path d="M0 0h18v2H0z" fill="#264a9a" />
          <path d="M2 12l3-5 2 3 3-6 2 4 4-4" fill="none" stroke="#30d040" strokeWidth="1.200" />
          <path d="M1 15h16" stroke="#c03030" />
        </svg>
        <MenuItems>
          {['File','Edit','View','Insert','Format','Drawing','Window','Help'].map((m) => <MenuItem key={m}>{m}</MenuItem>)}
        </MenuItems>
        <MdiButtons><MdiSet /></MdiButtons>
      </MenuBar>

      <ToolBar>
        {toolbar.map((t, i) => {
          if (typeof t === 'string') return <ToolButton key={i}><I>{icons[t]}</I></ToolButton>
          const [kind, a, b] = t
          if (kind === 'grip') return <Grip key={i} $after={5} />
          if (kind === 'grip2') return <Grip key={i} $before={12} $after={3} />
          if (kind === 'sep') return <Sep key={i} $before={a} $after={b} />
          if (kind === 'combo') return <Combo key={i}><Caret /><ComboArrow /></Combo>
          if (kind === 'play') return <PlayArrow key={i} />
          if (kind === 'icon') return <ToolButton key={i} $before={b}><I>{icons[a]}</I></ToolButton>
          return <ToolButton key={i}><AbcLabel>abc</AbcLabel></ToolButton>
        })}
      </ToolBar>

      <ChartArea>
        <Chart />
        <Legend $left={1} $top={1}>
          <LegendItem $color="#5058e0">GS:FTSEMIB - 60 min</LegendItem>
          <LegendItem $color="#5058e0" $extra={6}>MCEDB</LegendItem>
          <LegendItem $color="#fff">11/01/2023</LegendItem>
          <LegendItem $color="#00ff00" $extra={1}>L=27770.000</LegendItem>
          <LegendItem $color="#fff">Hi=27725.000</LegendItem>
          <LegendItem $color="#fff">Lo=27300.000</LegendItem>
          <LegendItem $color="#00ff00" $extra={-2}>C=27690.000</LegendItem>
          <LegendItem $color="#fff" $extra={2}>Close</LegendItem>
          <LegendItem $color="#00e8ff" $extra={8}>27690.000</LegendItem>
          <LegendItem $color="#fff">Media mobile no lag</LegendItem>
          <LegendItem $color="#0000ff" $extra={17}>27444.268</LegendItem>
        </Legend>
        <Legend $left={1} $top={604}>
          <LegendItem $color="#fff">MACD modif 1</LegendItem>
          <LegendItem $color="#ff0000" $extra={9}>389.22</LegendItem>
          <LegendItem $color="#ffff00">-370.15</LegendItem>
          <LegendItem $color="#333">759.37</LegendItem>
          <LegendItem $color="#999900">0.00</LegendItem>
        </Legend>
        <ChartButtons><MdiSet /></ChartButtons>
      </ChartArea>

      <ScrollRow>
        <ScrollLeft />
        <ScrollEnd>
          <ScrollThumb><ThumbLine /><ThumbLine /><ThumbLine /></ScrollThumb>
          <ScrollRight />
        </ScrollEnd>
      </ScrollRow>

      <TabRow>
        <TabNav><NavGlyph d="M1 1v8M8 1L3 5l5 4z" /></TabNav>
        <TabNav><NavGlyph d="M7 1L2 5l5 4z" /></TabNav>
        <TabNav><NavGlyph d="M2 1l5 4-5 4z" /></TabNav>
        <TabNav><NavGlyph d="M8 1v8M1 1l5 4-5 4z" /></TabNav>
        {tabs.map((t) => <Tab key={t} $active={t === 'STOXX-FTSEMIB sito'}>{t}</Tab>)}
      </TabRow>

      <StatusBar>
        <StatusHelp>For Help, press F1</StatusHelp>
        {statusCells.map(([text, w, color]) => <StatusCell key={text} $w={w} $color={color}>{text}</StatusCell>)}
        <StatusCell $w={18}><RedBall /></StatusCell>
        <StatusCell $w={124} $last $track={0.25}>01/11/2023 08:41</StatusCell>
      </StatusBar>
      <TaskStrip />
    </Page>
  )
}
